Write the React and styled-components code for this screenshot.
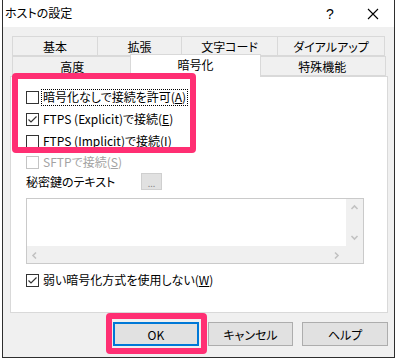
import React from 'react'
import styled, { createGlobalStyle } from 'styled-components'

const GlobalStyle = createGlobalStyle`
  html, body {
    margin: 0;
    padding: 0;
    background: #fff;
  }
  body {
    font-family: "Noto Sans CJK JP", "Noto Sans", sans-serif;
    font-size: 12px;
    color: #000;
    font-feature-settings: "palt";
  }
`;

const Window = styled.div`
  position: relative;
  box-sizing: border-box;
  margin-left: 2px;
  width: 393px;
  height: 358px;
  border: 1px solid #2e2e2e;
  border-top: none;
  background: #f0f0f0;
  display: flex;
  flex-direction: column;
`;

const TitleBar = styled.div`
  height: 27px;
  background: #fff;
  display: flex;
  align-items: center;
  padding-left: 2px;
`;

const Title = styled.div`
  flex: 1;
  font-size: 12px;
  line-height: 14px;
  margin-top: -1px;
`;

const TitleButton = styled.div`
  width: ${p => p.w}px;
  height: 27px;
  display: flex;
  align-items: center;
  justify-content: center;
  font-family: "Liberation Sans", sans-serif;
  font-size: 14px;
`;

const Body = styled.div`
  flex: 1;
  padding: 9px 6px 0 7px;
  display: flex;
  flex-direction: column;
`;

const TabRow = styled.div`
  display: flex;
  height: 20px;
  padding: 0 2px;
`;

const Tab = styled.div`
  box-sizing: border-box;
  width: ${p => p.w}px;
  height: ${p => (p.active ? 23 : 20)}px;
  margin: ${p => (p.active ? '-2px -2px -1px -3px' : '0 0 0 -1px')};
  padding-bottom: ${p => (p.active ? 3 : 0)}px;
  border: 1px solid #d9d9d9;
  border-bottom: ${p => (p.active ? 'none' : '1px solid #d9d9d9')};
  background: ${p => (p.active ? '#fff' : '#f0f0f0')};
  position: relative;
  z-index: ${p => (p.active ? 2 : 0)};
  display: flex;
  align-items: center;
  justify-content: center;
  font-size: 12px;
  &:first-child {
    margin-left: ${p => (p.active ? '-2px' : '0')};
  }
`;

const Panel = styled.div`
  box-sizing: border-box;
  height: 237px;
  border: 1px solid #d9d9d9;
  background: #fff;
  padding: 9px 0 0 15px;
  display: flex;
  flex-direction: column;
  position: relative;
  z-index: 1;
`;

const CheckRow = styled.div`
  height: ${p => p.h || 22}px;
  display: flex;
  align-items: center;
  gap: 3px;
  color: ${p => (p.disabled ? '#a3a3a3' : '#000')};
  margin-top: ${p => p.mt || 0}px;
`;

const Box = styled.div`
  box-sizing: border-box;
  width: 13px;
  height: 13px;
  border: 1px solid ${p => (p.disabled ? '#c4c4c4' : '#333')};
  background: #fff;
  display: flex;
`;

const Label = styled.span`
  line-height: 14px;
  padding: 0 1px 1px;
  outline: ${p => (p.focused ? '1px dotted #000' : 'none')};
`;

const Key = styled.span`
  text-decoration: underline;
`;

const KeyRow = styled.div`
  display: flex;
  align-items: center;
  height: 18px;
`;

const KeyLabel = styled.span`
  width: 115px;
`;

const SmallButton = styled.div`
  box-sizing: border-box;
  width: 21px;
  height: 17px;
  border: 1px solid #cfcfcf;
  background: #e1e1e1;
  color: #888;
  font-size: 9px;
  display: flex;
  align-items: flex-end;
  justify-content: center;
  line-height: 11px;
`;

const TextArea = styled.div`
  box-sizing: border-box;
  margin-top: 8px;
  width: 338px;
  height: 66px;
  border: 1px solid #cacaca;
  display: grid;
  grid-template-columns: 1fr 17px;
  grid-template-rows: 1fr 17px;
`;

const TextContent = styled.div`
  background: #fff;
`;

const ScrollBar = styled.div`
  background: #f0f0f0;
  display: flex;
  flex-direction: ${p => (p.vertical ? 'column' : 'row')};
  justify-content: space-between;
  align-items: center;
`;

const Arrow = styled.div`
  width: 17px;
  height: 17px;
  display: flex;
  align-items: center;
  justify-content: center;
`;

const ButtonRow = styled.div`
  display: flex;
  gap: 9px;
  padding-left: 103px;
  margin-top: 9px;
`;

const Button = styled.div`
  box-sizing: border-box;
  width: 86px;
  height: 24px;
  background: #e1e1e1;
  border: ${p => (p.primary ? '2px solid #0078d7' : '1px solid #adadad')};
  display: flex;
  align-items: center;
  justify-content: center;
  font-size: 12px;
`;

const Highlight = styled.div`
  position: absolute;
  box-sizing: border-box;
  left: ${p => p.x}px;
  top: ${p => p.y}px;
  width: ${p => p.w}px;
  height: ${p => p.h}px;
  border: 6px solid #ff2f73;
  border-radius: 4px;
  z-index: 5;
  pointer-events: none;
`;

const Check = () => (
  <svg width="11" height="11" viewBox="0 0 11 11">
    <path d="M1.5 5.5 L4 8 L9.5 2.5" fill="none" stroke="#333" strokeWidth="1.2" />
  </svg>
)

const Chevron = ({ dir }) => {
  const paths = {
    up: 'M1.5 5 L4.5 2 L7.5 5',
    down: 'M1.5 2 L4.5 5 L7.5 2',
    left: 'M5 1.5 L2 4.5 L5 7.5',
    right: 'M2 1.5 L5 4.5 L2 7.5',
  }
  return (
    <svg width="9" height="9" viewBox="0 0 9 7">
      <path d={paths[dir]} fill="none" stroke="#c2c2c2" strokeWidth="1.6" />
    </svg>
  )
}

const CheckOption = ({ checked, disabled, focused, h, mt, children }) => (
  <CheckRow disabled={disabled} h={h} mt={mt}>
    <Box disabled={disabled}>{checked && <Check />}</Box>
    <Label focused={focused}>{children}</Label>
  </CheckRow>
)

const tabsTop = [
  { label: '基本', w: 86 },
  { label: '拡張', w: 85 },
  { label: '文字コード', w: 97 },
  { label: 'ダイアルアップ', w: 108 },
]

const tabsBottom = [
  { label: '高度', w: 121 },
  { label: '暗号化', w: 128, active: true },
  { label: '特殊機能', w: 128 },
]

export default function App() {
  return (
    <>
      <GlobalStyle />
      <Window>
        <TitleBar>
          <Title>ホストの設定</Title>
          <TitleButton w={44}>?</TitleButton>
          <TitleButton w={42}>
            <svg width="12" height="12" viewBox="0 0 12 12">
              <path d="M1 1 L11 11 M11 1 L1 11" stroke="#000" strokeWidth="1.1" />
            </svg>
          </TitleButton>
        </TitleBar>
        <Body>
          <TabRow>
            {tabsTop.map(t => (
              <Tab key={t.label} w={t.w}>{t.label}</Tab>
            ))}
          </TabRow>
          <TabRow>
            {tabsBottom.map(t => (
              <Tab key={t.label} w={t.active ? t.w + 4 : t.w} active={t.active}>{t.label}</Tab>
            ))}
          </TabRow>
          <Panel>
            <CheckOption focused>暗号化なしで接続を許可(<Key>A</Key>)</CheckOption>
            <CheckOption checked>FTPS (Explicit)で接続(<Key>E</Key>)</CheckOption>
            <CheckOption>FTPS (Implicit)で接続(<Key>I</Key>)</CheckOption>
            <CheckOption disabled h={20}>SFTPで接続(<Key>S</Key>)</CheckOption>
            <KeyRow>
              <KeyLabel>秘密鍵のテキスト</KeyLabel>
              <SmallButton>...</SmallButton>
            </KeyRow>
            <TextArea>
              <TextContent />
              <ScrollBar vertical>
                <Arrow><Chevron dir="up" /></Arrow>
                <Arrow><Chevron dir="down" /></Arrow>
              </ScrollBar>
              <ScrollBar>
                <Arrow><Chevron dir="left" /></Arrow>
                <Arrow><Chevron dir="right" /></Arrow>
              </ScrollBar>
              <ScrollBar />
            </TextArea>
            <CheckOption checked mt={5}>弱い暗号化方式を使用しない(<Key>W</Key>)</CheckOption>
          </Panel>
          <ButtonRow>
            <Button primary>OK</Button>
            <Button>キャンセル</Button>
            <Button>ヘルプ</Button>
          </ButtonRow>
        </Body>
        <Highlight x={9} y={73} w={184} h={80} />
        <Highlight x={103} y={313} w={101} h={41} />
      </Window>
    </>
  )
}
